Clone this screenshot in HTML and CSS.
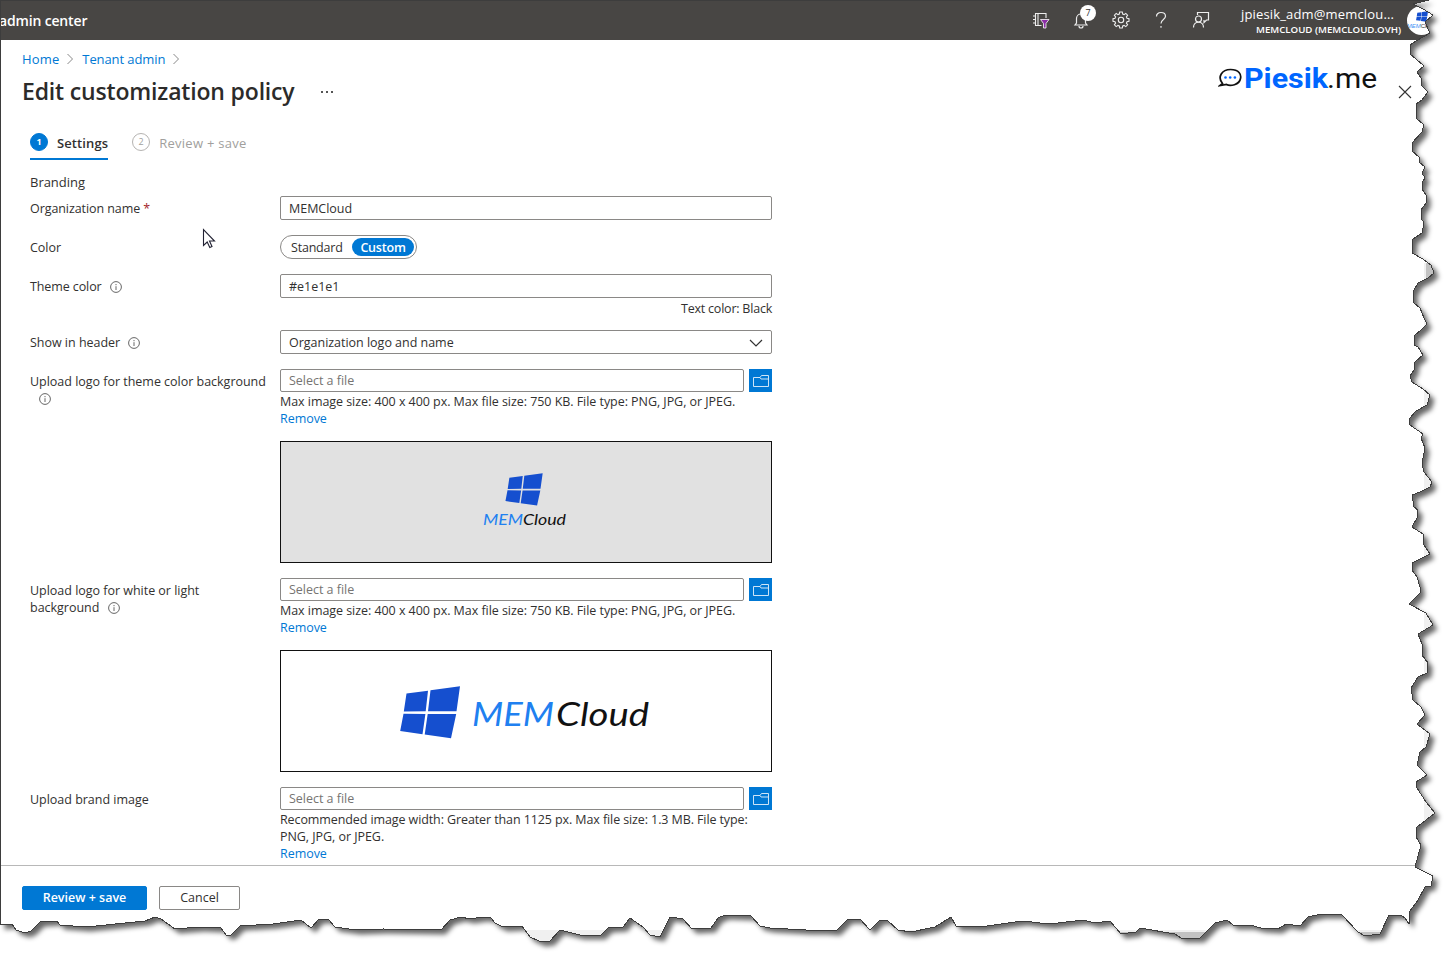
FILE: index.html
```html
<!DOCTYPE html>
<html lang="en">
<head>
<meta charset="utf-8">
<title>Edit customization policy</title>
<link rel="stylesheet" href="styles.css">
</head>
<body>
<svg class="defs" width="0" height="0">
  <symbol id="info" viewBox="0 0 12 12"><circle cx="6" cy="6" r="5.4" fill="none" stroke="#666" stroke-width="1"/><path d="M6 5.2V9M6 3v1.2" stroke="#666" stroke-width="1"/></symbol>
  <symbol id="folder" viewBox="0 0 16 12"><path d="M.5 2.500h6.500l1.500-2h7v11H.5zM7 2.500l1 1.500h7.500" fill="none" stroke="#e4f0fb" stroke-width=".9"/></symbol>
  <symbol id="win" viewBox="0 0 60 53"><path fill="#154fcf" d="M6.500 7.500 28 4.800 25.700 25.300 3.800 25.600zM30.500 4.300 60 .3 56.500 25.200 28 25.300zM3.500 27.800l21.900.2-2.900 20.200L.2 45zM27.700 28l28.500.1L51 52.300 24.700 48.500z"/></symbol>
</svg>
<div class="page">
  <header class="topbar">
    <div class="brand">admin center</div>
    <div class="icons">
      <svg width="18" height="18" viewBox="0 0 18 18" fill="none" stroke="#eee" stroke-width="1.1"><path d="M9.500 14.500H3.500V2.500H14V7M6 2.500V14.500M1 5h3M1 8.500h3M1 12h3"/><path d="M8.500 8.500h8.500l-3 4v4.500h-2.500v-4.500z" fill="#8a2da5" stroke="#fff" stroke-width=".8"/></svg>
      <span class="bell"><svg width="18" height="18" viewBox="0 0 18 18" fill="none" stroke="#eee" stroke-width="1.2"><path d="M3 14h12l-1.500-2V7.500a4.500 4.500 0 0 0-9 0v4.500zM7 15a2 2 0 0 0 4 0"/></svg><b class="badge">7</b></span>
      <svg width="18" height="18" viewBox="0 0 18 18" fill="none" stroke="#eee" stroke-width="1.1"><path d="M7.700 1h2.600l.4 2 1.400.6 1.700-1.200 1.800 1.800-1.200 1.700.6 1.400 2 .4v2.600l-2 .4-.6 1.400 1.200 1.700-1.800 1.800-1.700-1.200-1.400.6-.4 2H7.700l-.4-2-1.400-.6-1.700 1.200-1.800-1.800 1.200-1.700-.6-1.400-2-.4V7.700l2-.4.6-1.400-1.200-1.700 1.800-1.800 1.700 1.200 1.400-.6z"/><circle cx="9" cy="9" r="2.700"/></svg>
      <svg width="18" height="18" viewBox="0 0 18 18" fill="none" stroke="#eee" stroke-width="1.2"><path d="M4.500 5.500C4.500 3 6.500 1.500 9 1.500s4.500 1.500 4.500 3.800C13.500 8.500 9 8.700 9 12.500M9 15v1.700"/></svg>
      <svg width="18" height="18" viewBox="0 0 18 18" fill="none" stroke="#eee" stroke-width="1.200"><circle cx="6.500" cy="8" r="3"/><path d="M1.500 16.500c0-7 10-7 10 0M5.500 4v-2.500h11v7.500h-2l-2.500 2.500v-2.500"/></svg>
    </div>
    <div class="account"><span class="mail">jpiesik_adm@memclou...</span><span class="tenant">MEMCLOUD (MEMCLOUD.OVH)</span></div>
    <div class="avatar"><svg width="12" height="11"><use href="#win"/></svg><span><i>MEM</i>Cloud</span></div>
  </header>

  <div class="head">
    <nav class="crumbs"><a class="home">Home</a><svg width="7" height="12"><path d="M.5 1l5 5-5 5" fill="none" stroke="#888"/></svg><a class="tenant-link">Tenant admin</a><svg width="7" height="12"><path d="M.5 1l5 5-5 5" fill="none" stroke="#888"/></svg></nav>
    <div class="titlerow"><h1>Edit customization policy</h1><span class="dots"><i></i><i></i><i></i></span></div>
    <svg class="logo" width="160" height="32" viewBox="0 0 160 32"><path d="M4.500 19.500C-1 13 4 5.500 12.500 5.500s11 5 10 9C21.500 21 12 22.500 8.500 20.500L2 21.500z" fill="none" stroke="#111" stroke-width="1.700"/><g fill="#06f"><circle cx="7.500" cy="13.500" r="1.300"/><circle cx="12.200" cy="13.500" r="1.300"/><circle cx="16.900" cy="13.500" r="1.300"/></g><text x="26" y="24" class="logo-a" textLength="84" lengthAdjust="spacingAndGlyphs">Piesik</text><text x="109" y="24" class="logo-b" textLength="50" lengthAdjust="spacingAndGlyphs">.me</text></svg>
    <svg class="close" width="14" height="14"><path d="M1 1l12 12M13 1L1 13" stroke="#333" stroke-width="1.100"/></svg>
  </div>

  <div class="tabs">
    <div class="tab on"><b>1</b><span>Settings</span></div>
    <div class="tab"><b>2</b><span>Review + save</span></div>
  </div>

  <main class="form">
    <div class="section">Branding</div>
    <div class="row r-org"><label>Organization name <em>*</em></label><div class="field"><div class="input">MEMCloud</div></div></div>
    <div class="row r-color"><label>Color</label><div class="field"><div class="toggle"><span>Standard</span><b>Custom</b></div></div></div>
    <div class="row r-theme"><label>Theme color <svg class="info"><use href="#info"/></svg></label><div class="field"><div class="input">#e1e1e1</div><div class="right">Text color: Black</div></div></div>
    <div class="row r-show"><label>Show in header <svg class="info"><use href="#info"/></svg></label><div class="field"><div class="input select">Organization logo and name<svg width="14" height="8"><path d="M1 1l6 6 6-6" fill="none" stroke="#333" stroke-width="1.200"/></svg></div></div></div>
    <div class="row r-up"><label>Upload logo for theme color background<br><svg class="info first"><use href="#info"/></svg></label><div class="field">
      <div class="file"><div class="input ph">Select a file</div><div class="btn-file"><svg width="16" height="12"><use href="#folder"/></svg></div></div>
      <div class="hint"><p>Max image size: 400 x 400 px. Max file size: 750 KB. File type: PNG, JPG, or JPEG.</p><a>Remove</a></div>
      <div class="preview gray"><svg width="88" height="60" viewBox="0 0 88 60"><use href="#win" x="23" y="1" width="38" height="33"/><text class="hand-blue" x="1" y="53" font-size="15" textLength="40" lengthAdjust="spacingAndGlyphs">MEM</text><text class="hand" x="41" y="53" font-size="15" textLength="43" lengthAdjust="spacingAndGlyphs">Cloud</text></svg></div>
    </div></div>
    <div class="row r-up"><label>Upload logo for white or light<br>background <svg class="info"><use href="#info"/></svg></label><div class="field">
      <div class="file"><div class="input ph">Select a file</div><div class="btn-file"><svg width="16" height="12"><use href="#folder"/></svg></div></div>
      <div class="hint"><p>Max image size: 400 x 400 px. Max file size: 750 KB. File type: PNG, JPG, or JPEG.</p><a>Remove</a></div>
      <div class="preview"><svg width="254" height="60" viewBox="0 0 254 60"><use href="#win" x="1" y="5" width="60" height="53"/><text class="hand-blue" x="73" y="45" font-size="32" textLength="82" lengthAdjust="spacingAndGlyphs">MEM</text><text class="hand" x="157" y="45" font-size="33" textLength="93" lengthAdjust="spacingAndGlyphs">Cloud</text></svg></div>
    </div></div>
    <div class="row r-up"><label>Upload brand image</label><div class="field">
      <div class="file"><div class="input ph">Select a file</div><div class="btn-file"><svg width="16" height="12"><use href="#folder"/></svg></div></div>
      <div class="hint"><p><span class="rec">Recommended image width: Greater than 1125 px. Max file size: 1.3 MB. File type:</span><br>PNG, JPG, or JPEG.</p><a>Remove</a></div>
    </div></div>
  </main>

  <footer class="foot"><button class="primary">Review + save</button><button>Cancel</button></footer>
</div>

<svg class="cursor" width="14" height="21" viewBox="0 0 14 21"><path d="M1.500 1.500v16l3.700-3.500 2.600 5.500 2.200-1-2.500-5.500h5z" fill="#fff" stroke="#223" stroke-width="1.100"/></svg>

<svg class="torn" width="1456" height="960" viewBox="0 0 1456 960">
  <defs>
    <path id="sheet" d="M0 0H1429L1413 4 1423 9 1433 15 1425 22 1430 33 1416 41 1410 45 1410 54 1416 59 1424 66 1417 72 1421 78 1422 86 1428 92 1422 100 1416 104 1416 118 1424 125 1422 132 1412 143 1412 151 1419 157 1419 162 1425 167 1422 173 1425 178 1422 183 1422 189 1426 195 1426 203 1421 210 1421 218 1424 223 1422 233 1413 239 1412 253 1423 259 1431 265 1434 273 1428 278 1418 283 1413 292 1414 303 1420 308 1424 318 1427 324 1422 329 1414 336 1414 345 1418 347 1423 355 1415 362 1414 370 1410 376 1412 382 1423 389 1430 395 1427 405 1416 411 1409 419 1410 425 1423 434 1421 438 1425 448 1422 463 1424 472 1432 482 1430 487 1420 492 1412 495 1414 507 1418 510 1417 518 1412 527 1423 534 1424 545 1430 554 1412 563 1412 570 1417 577 1420 587 1420 593 1409 604 1426 613 1433 625 1418 634 1422 644 1422 655 1428 663 1427 673 1418 677 1411 688 1413 700 1421 707 1425 715 1417 724 1430 734 1426 747 1420 752 1417 765 1427 775 1416 782 1417 788 1426 802 1435 813 1417 827 1416 837 1421 845 1415 867 1433 876 1431 886 1425 887 1418 900 1410 911 1409 924 1405 918 1401 915 1389 915 1380 934 1365 936 1358 932 1341 914 1321 914 1308 917 1300 926 1286 924 1278 929 1261 928 1250 925 1233 925 1227 920 1215 923 1200 938 1181 938 1175 934 1140 928 1136 932 1121 934 1110 921 1095 923 1083 920 1050 924 1040 923 1023 921 1008 923 980 927 956 926 951 917 935 927 911 932 898 930 887 920 880 920 870 930 860 919 848 919 836 931 823 930 806 930 770 928 760 926 751 916 725 915 718 918 711 928 692 929 683 919 670 917 660 937 650 935 643 927 630 918 623 927 608 928 601 935 580 935 560 930 550 941 541 942 530 937 522 926 503 927 495 923 491 918 483 917 470 919 461 917 450 920 441 930 383 929 356 930 335 927 328 919 319 919 311 928 301 920 273 924 240 926 231 935 226 935 221 928 200 927 175 929 161 919 155 917 145 921 86 927 60 925 57 921 40 922 31 931 25 933 16 930 12 924 0 925z"/>
    <mask id="outside"><rect width="1456" height="960" fill="#fff"/><use href="#sheet" fill="#000"/></mask>
    <clipPath id="inside"><use href="#sheet"/></clipPath>
    <filter id="soft" x="-2%" y="-2%" width="104%" height="104%"><feGaussianBlur stdDeviation="2.600"/></filter>
  </defs>
  <g clip-path="url(#inside)"><path d="M1424 263h14v600h-14zM500 930h920v15H500z" fill="#f0f0f0"/><path d="M1426 263h12v17h-12zM1120 932h300v10h-300z" fill="#c2c2c2"/></g>
  <g mask="url(#outside)"><rect width="1456" height="960" fill="#fff"/><g filter="url(#soft)"><use href="#sheet" transform="translate(4.500 4.500)" fill="#000" fill-opacity=".6"/></g></g>
  <use href="#sheet" fill="none" stroke="#3d3d3d" stroke-width="1" shape-rendering="crispEdges"/>
</svg>
</body>
</html>
```
FILE: styles.css
```css
* { box-sizing: border-box; }
body { margin: 0; width: 1456px; height: 960px; overflow: hidden; background: #fff; color: #323130; font: 12.5px/17px "Open Sans", "Noto Sans", sans-serif; letter-spacing: -.02px; position: relative; }
p, h1 { margin: 0; }
a { color: #0078d4; }
.defs { position: absolute; }
.page { height: 960px; display: flex; flex-direction: column; border-left: 1px solid #3d3d3d; }
.topbar { height: 40px; flex: none; background: #484644; border-top: 1px solid #3a3a3a; color: #fff; display: flex; align-items: center; }
.brand { font-weight: 600; font-size: 14px; width: 1031px; flex: none; margin-left: -2px; letter-spacing: -.16px; }
.icons { display: flex; gap: 22px; margin: 0 0 2px 2px; flex: none; }
.icons svg { display: block; }
.bell { position: relative; }
.badge { position: absolute; left: 8px; top: -6px; width: 16px; height: 16px; border-radius: 50%; background: #fff; color: #333; font: 9px/16px "Open Sans", sans-serif; text-align: center; }
.account { width: 172px; flex: none; margin-left: 19px; padding-top: 2px; display: flex; flex-direction: column; align-items: flex-end; }
.mail { font-size: 13px; line-height: 16px; width: 162px; white-space: nowrap; letter-spacing: .16px; margin-right: -2px; }
.tenant { font-size: 9.7px; line-height: 14px; font-weight: 600; white-space: nowrap; margin-top: 1px; }
.avatar { width: 29px; height: 29px; flex: none; margin-left: 6px; border-radius: 50%; background: #fff; overflow: hidden; display: flex; flex-direction: column; align-items: center; padding-top: 5px; }
.avatar span { font: 6px/8px "Liberation Sans", sans-serif; color: #333; }
.avatar i { color: #3f93f5; }
.head { height: 82px; padding: 10px 0 0 21px; position: relative; flex: none; }
.crumbs { display: flex; align-items: center; gap: 8px; height: 18px; font-size: 13px; }
.home { letter-spacing: .15px; }
.tenant-link { letter-spacing: -.1px; }
.titlerow { display: flex; align-items: center; height: 46px; gap: 26px; }
h1 { font-size: 23px; line-height: 32px; font-weight: 600; letter-spacing: -.17px; color: #2c2b2a; }
.dots { display: flex; gap: 3px; padding-top: 1px; }
.dots i { width: 2px; height: 2px; background: #555; }
.logo { position: absolute; left: 1217px; top: 24px; }
.logo-a { font: bold 27px Roboto, sans-serif; fill: #0066ff; }
.logo-b { font: 27px Roboto, sans-serif; fill: #111; }
.close { position: absolute; left: 1397px; top: 45px; }
.tabs { display: flex; gap: 24px; padding: 7px 0 0 29px; height: 47px; flex: none; }
.tab { display: flex; gap: 9px; height: 31px; color: #a19f9d; font-size: 13px; letter-spacing: .27px; }
.tab b { width: 18px; height: 18px; margin-top: 3.5px; border: 1px solid #b5b3b1; border-radius: 50%; font: 9px/16px "Open Sans", sans-serif; text-align: center; }
.tab span { line-height: 28px; }
.tab.on { border-bottom: 2px solid #0078d4; color: #323130; font-weight: 600; letter-spacing: .1px; }
.tab.on b { background: #0078d4; border-color: #0078d4; color: #fff; font-weight: 700; }
.form { height: 696px; flex: none; padding: 5px 0 0 29px; overflow: hidden; }
.section { height: 22px; font-size: 13px; }
.row { display: grid; grid-template-columns: 250px 492px; }
label { padding-top: 4px; }
label em { color: #a4262c; font-style: normal; }
.info { width: 12px; height: 12px; margin-left: 5px; vertical-align: -2px; }
.info.first { margin-left: 9px; }
.r-org, .r-color { height: 39px; }
.r-org label { letter-spacing: -.08px; }
.r-theme { height: 56px; }
.r-theme label { letter-spacing: -.1px; }
.r-show { height: 39px; }
.r-up { height: 209px; }
.input { height: 24px; border: 1px solid #8a8886; border-radius: 2px; padding: 1px 8px 0; line-height: 22px; }
.right { text-align: right; line-height: 22px; letter-spacing: -.22px; }
.toggle { width: 137px; height: 24px; border: 1px solid #8a8886; border-radius: 12px; display: flex; align-items: center; padding-left: 10px; letter-spacing: -.2px; }
.toggle span { width: 61px; }
.toggle b { width: 62px; height: 18px; line-height: 19px; border-radius: 9px; background: #0078d4; color: #fff; text-align: center; font-weight: 600; font-size: 12.5px; }
.select { display: flex; justify-content: space-between; align-items: center; }
.file { display: flex; gap: 5px; height: 23px; }
.file .input { flex: 1; height: 23px; line-height: 21px; padding-top: 0; }
.ph { color: #767472; }
.btn-file { width: 23px; height: 23px; background: #0078d4; display: flex; align-items: center; justify-content: center; }
.hint { padding-top: 1px; white-space: nowrap; letter-spacing: -.05px; }
.rec { letter-spacing: -.1px; }
.hint a { display: block; }
.preview { height: 122px; margin-top: 14px; border: 1px solid #111; display: flex; align-items: center; justify-content: center; }
.gray { background: #e1e1e1; }
.hand, .hand-blue { font-family: Lato, sans-serif; font-style: italic; fill: #111; }
.hand-blue { fill: #2080f0; }
.foot { border-top: 1px solid #b8b8b8; padding: 20px 0 0 21px; display: flex; gap: 12px; flex: 1; align-items: flex-start; }
button { width: 81px; height: 24px; padding: 0; border: 1px solid #8a8886; border-radius: 2px; background: #fff; color: #323130; font: 12.5px/20px "Open Sans", sans-serif; }
.primary { width: 125px; background: #0078d4; border-color: #0078d4; color: #fff; font-weight: 600; }
.cursor { position: absolute; left: 202px; top: 228px; }
.torn { position: absolute; left: 0; top: 0; }
```
